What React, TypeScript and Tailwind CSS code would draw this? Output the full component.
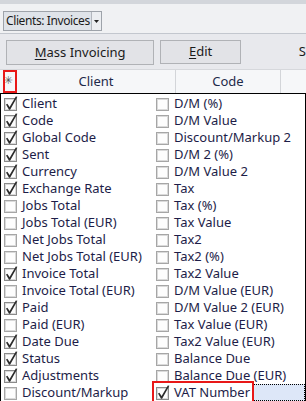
import React from "react";

// Column chooser items: [label, checked]
const leftItems: [string, boolean][] = [
  ["Client", true],
  ["Code", true],
  ["Global Code", true],
  ["Sent", true],
  ["Currency", true],
  ["Exchange Rate", true],
  ["Jobs Total", false],
  ["Jobs Total (EUR)", false],
  ["Net Jobs Total", false],
  ["Net Jobs Total (EUR)", false],
  ["Invoice Total", true],
  ["Invoice Total (EUR)", false],
  ["Paid", true],
  ["Paid (EUR)", false],
  ["Date Due", true],
  ["Status", true],
  ["Adjustments", true],
  ["Discount/Markup", false],
];

const rightItems: [string, boolean][] = [
  ["D/M (%)", false],
  ["D/M Value", false],
  ["Discount/Markup 2", false],
  ["D/M 2 (%)", false],
  ["D/M Value 2", false],
  ["Tax", false],
  ["Tax (%)", false],
  ["Tax Value", false],
  ["Tax2", false],
  ["Tax2 (%)", false],
  ["Tax2 Value", false],
  ["D/M Value (EUR)", false],
  ["D/M Value 2 (EUR)", false],
  ["Tax Value (EUR)", false],
  ["Tax2 Value (EUR)", false],
  ["Balance Due", false],
  ["Balance Due (EUR)", false],
  ["VAT Number", true],
];

const CheckBox: React.FC<{ checked: boolean }> = ({ checked }) => (
  <svg width="14" height="15" viewBox="0 0 14 15" className="shrink-0 overflow-visible">
    <rect x="0.5" y="2.5" width="12" height="12" fill="#f7f7f7" stroke={checked ? "#8a8a8a" : "#a6a6a6"} />
    <rect x="1.5" y="3.5" width="10" height="10" fill="#fdfdfd" stroke="#dadada" />
    {checked && (
      <path d="M2 8.6 L3.4 7.7 L5.6 11 L11.8 0.4 L13.4 0.8 L6.1 13.8 L5 13.8 Z" fill="#2b2b2b" />
    )}
  </svg>
);

const Row: React.FC<{ label: string; checked: boolean; className?: string }> = ({
  label,
  checked,
  className = "",
}) => (
  <div className={`flex items-center h-[17px] pl-[3px] gap-[4px] ${className}`}>
    <CheckBox checked={checked} />
    <span className="text-[13px] leading-[17px] text-[#1d1d48] whitespace-nowrap">{label}</span>
  </div>
);

export default function App() {
  return (
    <div
      className="relative w-[306px] h-[401px] overflow-hidden bg-white flex flex-col"
      style={{ fontFamily: '"Noto Sans", "Segoe UI", sans-serif' }}
    >
      {/* window strip */}
      <div className="h-[4px] bg-[#d3d6db]" />

      {/* view selector */}
      <div className="h-[29px] bg-[#f0f1f3] pl-[3px] pt-[7px]">
        <div className="flex h-[20px] w-[99px] border border-[#9ea3aa] bg-[#dfe3e9]">
          <div className="flex-1 flex items-center pl-[2px] text-[12px] tracking-[-0.4px] text-[#1b1b1b] whitespace-nowrap">
            Clients: Invoices
          </div>
          <div className="w-[10px] border-l border-[#b3b7be] bg-[#eceef1] flex items-center justify-center">
            <svg width="5" height="3" viewBox="0 0 5 3">
              <path d="M0 0 H5 L2.5 3 Z" fill="#222" />
            </svg>
          </div>
        </div>
      </div>
      <div className="h-[1px] bg-[#c3c7ce]" />

      {/* toolbar */}
      <div className="h-[35px] bg-[#e8e9ed] flex items-start pt-[6px] pl-[6px] gap-[6px] whitespace-nowrap">
        <button className="h-[25px] w-[149px] border border-[#b0b2b6] bg-[#e2e3e7] text-[13px] text-[#1b1b1b]">
          <span className="underline underline-offset-2">M</span>ass Invoicing
        </button>
        <button className="h-[24px] w-[81px] border border-[#b0b2b6] bg-[#e2e3e7] text-[13px] text-[#1b1b1b]">
          <span className="underline underline-offset-2">E</span>dit
        </button>
        <div className="h-[24px] pl-[52px] flex items-center text-[13px] text-[#1b1b1b]">S</div>
      </div>

      {/* grid header */}
      <div className="h-[24px] flex bg-[#f6f7f9] border-t border-[#d6d8dc] text-[13px] text-[#1e2a4a]">
        <div
          className="w-[17px] border-r border-[#d3d5d9] flex items-center justify-center text-[11px] text-[#555]"
          style={{ fontFamily: '"DejaVu Sans", sans-serif' }}
        >
          ✳
        </div>
        <div className="w-[159px] border-r border-[#d3d5d9] flex items-center justify-center">Client</div>
        <div className="w-[105px] border-r border-[#d3d5d9] flex items-center justify-center">Code</div>
        <div className="flex-1" />
      </div>

      {/* column chooser list */}
      <div className="flex-1 flex border-t border-l border-r border-black pt-[1px]">
        <div className="w-[152px] flex flex-col">
          {leftItems.map(([label, checked]) => (
            <Row key={label} label={label} checked={checked} />
          ))}
        </div>
        <div className="flex-1 flex flex-col">
          {rightItems.map(([label, checked], i) =>
            i === rightItems.length - 1 ? (
              <div
                key={label}
                className="relative h-[17px] border border-dotted border-black bg-[#dde7f8]"
              >
                <Row label={label} checked={checked} className="-mt-[1px] -ml-[1px] w-[100px] bg-white" />
                <div className="absolute -left-[2px] -top-[4px] w-[102px] h-[22px] border-2 border-[#e81818]" />
              </div>
            ) : (
              <Row key={label} label={label} checked={checked} />
            )
          )}
        </div>
      </div>

      {/* highlight on the column chooser button */}
      <div className="absolute left-[3px] top-[70px] w-[14px] h-[23px] border-2 border-[#e81818]" />
    </div>
  );
}
